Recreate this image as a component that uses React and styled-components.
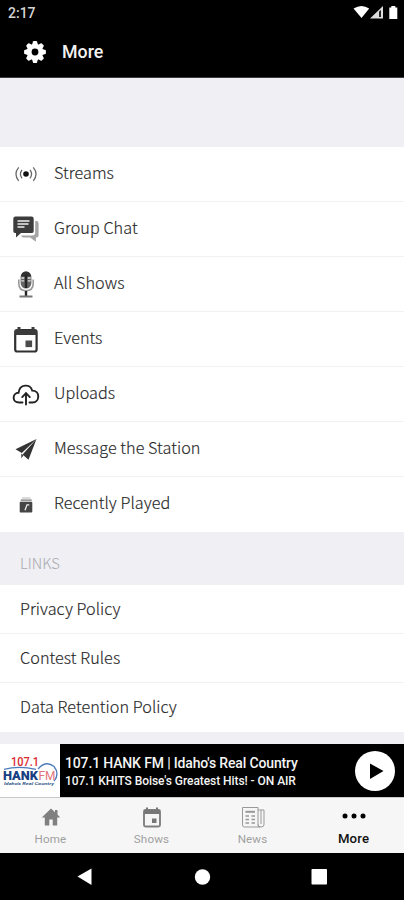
import React from "react";
import styled, { createGlobalStyle } from "styled-components";

const Global = createGlobalStyle`
  * { box-sizing: border-box; }
  body { margin: 0; background: #000; }
`;

const Screen = styled.div`
  width: 404px;
  height: 900px;
  display: flex;
  flex-direction: column;
  overflow: hidden;
  background: #efeff4;
  font-family: Roboto, sans-serif;
`;

const StatusBar = styled.div`
  height: 26px;
  flex: none;
  display: flex;
  justify-content: space-between;
  background: #000;
  color: #d4d4d4;
  padding-left: 8px;
  font-size: 14px;
  font-weight: 500;
  line-height: 26px;
`;

const Header = styled.header`
  height: 52px;
  flex: none;
  display: flex;
  align-items: center;
  background: #000;
  border-bottom: 1px solid #3c3c3e;
  padding-left: 23px;
  gap: 15px;
`;

const Title = styled.h1`
  margin: 0;
  font-size: 17.8px;
  line-height: 52px;
  font-weight: 500;
  color: #f2f2f2;
`;

const Spacer = styled.div`
  height: ${(p) => p.$h}px;
  flex: none;
`;

const Menu = styled.nav`
  flex: none;
  background: #fff;
  display: flex;
  flex-direction: column;
`;

const MenuRow = styled.div`
  height: 55px;
  display: flex;
  align-items: center;
  padding-bottom: 1px;
  border-bottom: 1px solid #f1f1f3;
  &:last-child { border-bottom-color: #fff; }
`;

const LinkRow = styled(MenuRow)`
  height: 49px;
  padding: 1px 0 0 20px;
`;

const RowIcon = styled.svg`
  width: 54px;
  height: 54px;
  flex: none;
  display: block;
`;

const ListText = styled.span`
  font-family: "Noto Sans CJK SC", "Noto Sans", sans-serif;
  font-size: 16.2px;
  font-weight: 300;
  line-height: 24px;
  letter-spacing: 0.06px;
  color: #262626;
  -webkit-text-stroke: 0.15px #262626;
  white-space: nowrap;
  margin-bottom: 4px;
`;

const SectionHead = styled.h2`
  margin: 0;
  height: 53px;
  flex: none;
  padding: 21px 0 0 20px;
  font-family: "Noto Sans CJK SC", "Noto Sans", sans-serif;
  font-size: 14.8px;
  line-height: 20px;
  font-weight: 300;
  color: #a9a9ae;
`;

const Player = styled.div`
  height: 53px;
  flex: none;
  display: flex;
  align-items: center;
  background: #000;
`;

const Logo = styled.svg`
  width: 60px;
  height: 53px;
  flex: none;
  background: #fff;
`;

const Track = styled.div`
  flex: 1;
  padding: 2px 0 0 5px;
  color: #f4f4f4;
  white-space: nowrap;
  font-weight: 500;
`;

const Station = styled.div`
  font-size: 14px;
  line-height: 18px;
  letter-spacing: -0.15px;
`;

const Program = styled(Station)`
  font-size: 12px;
  letter-spacing: -0.06px;
`;

const PlayButton = styled.button`
  width: 40px;
  height: 40px;
  margin: 0 9px 0 0;
  padding: 0;
  border: 0;
  border-radius: 50%;
  background: #fff;
  svg { display: block; }
`;

const Tabs = styled.div`
  height: 56px;
  flex: none;
  display: grid;
  grid-template-columns: repeat(4, 1fr);
  background: #f6f6f6;
  border-top: 1px solid #c9c9c9;
`;

const Tab = styled.div`
  display: flex;
  flex-direction: column;
  align-items: center;
  padding-top: 5px;
  font-size: ${(p) => (p.$active ? 13.2 : 11.6)}px;
  line-height: 14px;
  letter-spacing: 0.15px;
  font-weight: ${(p) => (p.$active ? 500 : 400)};
  color: ${(p) => (p.$active ? "#111" : "#a0a0a0")};
  svg { margin-bottom: 3px; }
`;

const SystemNav = styled.div`
  height: 47px;
  flex: none;
  background: #000;
  display: flex;
  svg { display: block; }
`;

const Gear = () => (
  <svg width="24" height="24" viewBox="-12 -12 24 24">
    <g fill="#fff">
      {[0, 45, 90, 135, 180, 225, 270, 315].map((a) => (
        <path key={a} d="M-3.2-6.5L-2-10.4Q-1.8-10.9-1.2-10.9H1.2Q1.8-10.9 2-10.4L3.2-6.5Z" transform={`rotate(${a})`} />
      ))}
    </g>
    <circle r="5.7" fill="none" stroke="#fff" strokeWidth="4.6" />
  </svg>
);

const Streams = () => (
  <RowIcon viewBox="0 0 54 54" fill="none" stroke="#666" strokeWidth="1.25">
    <circle cx="26" cy="27" r="2.8" fill="#111" stroke="none" />
    <path d="M22 22.800Q18.800 27 22 31.300M30 22.800Q33.200 27 30 31.300M18.700 20.300Q13.200 27 18.700 33.800M33.300 20.300Q38.800 27 33.300 33.800" />
  </RowIcon>
);

const Chat = () => (
  <RowIcon viewBox="0 0 54 54">
    <path d="M35.200 19h1.200q2.200 0 2.200 2.200v12.200q0 2-2 2h-.7v4.300l-5.800-4.300h-6.700q-2 0-2.200-2h11q3 0 3-3Z" fill="#a5a5a5" />
    <path d="M15.500 14.500h16q2.200 0 2.200 2.200v12.200q0 2.200-2.200 2.200H21l-5 4.300v-4.300h-.5q-2.200 0-2.200-2.200V16.700Q13.300 14.500 15.500 14.500Z" fill="#3c3c3c" />
    <path d="M17.500 19h12M17.500 22h11M17.500 25h7" stroke="#c2c2c2" strokeWidth="2" />
  </RowIcon>
);

const Mic = () => (
  <RowIcon viewBox="0 0 54 54">
    <path d="M18.800 22.500v4q0 7.200 7.200 7.200t7.200-7.200v-4" fill="none" stroke="#999" strokeWidth="1.600" />
    <rect x="20.600" y="14.500" width="10.800" height="17" rx="5.400" fill="#666" />
    <path d="M21 19.500Q21.800 14.500 26 14.500t5 5Z" fill="#303030" />
    <path d="M21.300 21h3M27.700 21h3M21.300 23.800h3M27.700 23.800h3" stroke="#ddd" strokeWidth="1.300" />
    <path d="M26 18v13M26 34v5" stroke="#242424" strokeWidth="2.400" />
    <path d="M19.500 39.500h13" stroke="#777" strokeWidth="2" />
  </RowIcon>
);

const Events = () => (
  <RowIcon viewBox="0 0 54 54">
    <rect x="15.200" y="18.200" width="21.400" height="21.300" rx="2" fill="none" stroke="#303030" strokeWidth="2.200" />
    <path d="M15 18h22v5H15ZM17.500 15h3v4h-3ZM31.500 15h3v4h-3Z" fill="#3b3b3b" />
    <rect x="25.500" y="28.500" width="6.600" height="6.600" fill="#4b4b4b" />
  </RowIcon>
);

const Upload = () => (
  <RowIcon viewBox="0 1 54 54" fill="none" stroke="#222" strokeWidth="1.900" strokeLinecap="round">
    <path d="M22.500 36.500h-3.200C11.500 36.500 12.200 27 18.600 26.700C19.500 17.700 30.500 17.500 32.200 24.600C40.500 24.700 40 36.500 32.500 36.500H29.500" />
    <path d="M26 38.500V28M22.200 31.100L26 27.200l3.800 3.900" />
  </RowIcon>
);

const Plane = () => (
  <RowIcon viewBox="0 0 54 54" fill="#333">
    <path d="M36.500 17L15.500 27.200l6.300 3.800Z" />
    <path d="M36.500 17L22.600 32.500l5.900 5.200Z" />
    <path d="M21.300 31.500v4.800l2.200-2.700Z" />
  </RowIcon>
);

const Recent = () => (
  <RowIcon viewBox="0 0.5 54 54">
    <path d="M22 21.500h8.500" stroke="#ccc" strokeWidth="1.400" />
    <path d="M20.700 23.700h11" stroke="#999" strokeWidth="1.800" />
    <rect x="19.700" y="25.300" width="12.600" height="10.700" rx="1" fill="#454545" />
    <path d="M25 33.800l2-5.500h2.300" stroke="#eee" strokeWidth="1.300" fill="none" />
  </RowIcon>
);

const menu = [
  ["Streams", Streams],
  ["Group Chat", Chat],
  ["All Shows", Mic],
  ["Events", Events],
  ["Uploads", Upload],
  ["Message the Station", Plane],
  ["Recently Played", Recent],
];

const links = ["Privacy Policy", "Contest Rules", "Data Retention Policy"];

export default function App() {
  return (
    <Screen>
      <Global />
      <StatusBar>
        <span>2:17</span>
        <svg width="52" height="26" viewBox="352 0 52 26">
          <path d="M353.500 8.500Q361.500 3.500 369.200 8.500L361.500 18Z" fill="#fff" />
          <path d="M370 18.500L383 6v12.500Z" fill="#ddd" />
          <path d="M379 11.500l2-1.500v7h-2Z" fill="#222" />
          <path d="M389.300 7.500h2V6h4v1.500h2V19h-8Z" fill="#fff" />
        </svg>
      </StatusBar>
      <Header>
        <Gear />
        <Title>More</Title>
      </Header>
      <Spacer $h={69} />
      <Menu>
        {menu.map(([label, Icon]) => (
          <MenuRow key={label}>
            <Icon />
            <ListText>{label}</ListText>
          </MenuRow>
        ))}
      </Menu>
      <SectionHead>LINKS</SectionHead>
      <Menu>
        {links.map((label) => (
          <LinkRow key={label}>
            <ListText>{label}</ListText>
          </LinkRow>
        ))}
      </Menu>
      <Spacer $h={12} />
      <Player>
        <Logo viewBox="0 0 60 53">
          <text x="11" y="22" fontFamily="Roboto, sans-serif" fontWeight="500" fontSize="13.500" fill="#db2931" textLength="28" lengthAdjust="spacingAndGlyphs">107.1</text>
          <path d="M38 25Q46 16 54 22.500Q60 30 54 37M4 25.300Q19 21.500 36 25.300" fill="none" stroke="#4d7cba" strokeWidth="1.300" />
          <text x="3" y="36" fontFamily="Roboto, sans-serif" fontWeight="900" fontSize="13" fill="#173f82" textLength="35" lengthAdjust="spacingAndGlyphs">HANK</text>
          <text x="38.500" y="36" fontFamily="Roboto, sans-serif" fontWeight="400" fontSize="13" fill="#e4747a" textLength="17" lengthAdjust="spacingAndGlyphs">FM</text>
          <text x="4" y="41.300" fontFamily="Roboto, sans-serif" fontStyle="italic" fontWeight="700" fontSize="4" fill="#36588c" textLength="50" lengthAdjust="spacingAndGlyphs">Idaho's Real Country</text>
        </Logo>
        <Track>
          <Station>107.1 HANK FM | Idaho's Real Country</Station>
          <Program>107.1 KHITS Boise's Greatest Hits! - ON AIR</Program>
        </Track>
        <PlayButton aria-label="Play">
          <svg width="40" height="40" viewBox="0 0 40 40"><path d="M15 12.500L28.500 20L15 28Z" fill="#000" /></svg>
        </PlayButton>
      </Player>
      <Tabs>
        <Tab>
          <svg width="28" height="26" viewBox="0 0 28 26"><path d="M14 5.500L4.800 14.500h3V22.500h4.500v-6h3.400v6h4.500v-8h3L20.500 11.500V7h-2.500v2.200Z" fill="#808080" /></svg>
          Home
        </Tab>
        <Tab>
          <svg width="28" height="26" viewBox="0 0 28 26">
            <rect x="6" y="7" width="16" height="16.500" rx="1.500" fill="none" stroke="#808080" strokeWidth="1.900" />
            <path d="M6 7h16v4H6ZM8 4.500h2v3H8ZM18 4.500h2v3h-2ZM14 15.500h4.500V20H14Z" fill="#777" />
          </svg>
          Shows
        </Tab>
        <Tab>
          <svg width="28" height="26" viewBox="0 0 28 26" fill="none" stroke="#999" strokeWidth="1">
            <path d="M3.500 4.500H19v17.500q0 2 2 2H5.500q-2 0-2-2ZM19 7h6v14.500q0 2.500-3 2.500t-3-2.500M22 7v14" />
            <path d="M6.500 8.800h9.500" strokeWidth="2" />
            <path d="M6.500 13h3.500M12.500 13H16M6.500 16.500H10M12.500 16.500H16M6.500 20H10M12.500 20H16" strokeWidth="1.700" />
          </svg>
          News
        </Tab>
        <Tab $active>
          <svg width="28" height="26" viewBox="0 0 28 26"><g fill="#000"><circle cx="5" cy="13" r="2.500" /><circle cx="14" cy="13" r="2.500" /><circle cx="23" cy="13" r="2.500" /></g></svg>
          More
        </Tab>
      </Tabs>
      <SystemNav>
        <svg width="404" height="47" viewBox="0 0 404 47" fill="#fff">
          <path d="M77.500 23.500L91.500 15.500v16.500Z" />
          <circle cx="202.500" cy="24" r="7.700" />
          <rect x="311.500" y="16" width="15.500" height="15.500" rx=".7" />
        </svg>
      </SystemNav>
    </Screen>
  );
}
